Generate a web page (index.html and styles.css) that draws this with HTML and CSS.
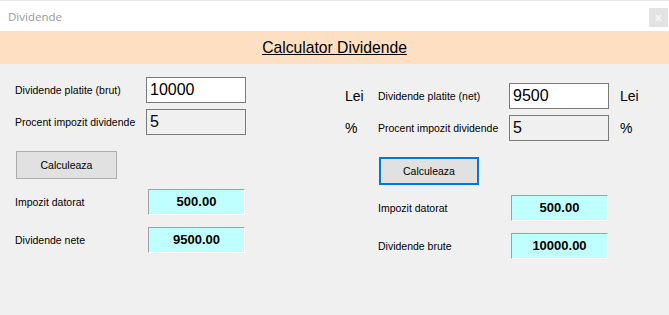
FILE: index.html
```html
<!DOCTYPE html>
<html lang="ro">
<head>
    <meta charset="UTF-8">
    <meta name="viewport" content="width=device-width, initial-scale=1.0">
    <title>Dividende</title>
    <link rel="stylesheet" href="styles.css">
</head>
<body>
    <div class="titlebar">
        <span class="caption">Dividende</span>
        <span class="close">x</span>
    </div>
    <div class="header">
        <h1>Calculator Dividende</h1>
    </div>
    <div class="form">
        <div class="panel left">
            <div class="row">
                <label>Dividende platite (brut)</label>
                <input class="field" type="text" value="10000">
            </div>
            <div class="row">
                <label>Procent impozit dividende</label>
                <input class="field ro" type="text" value="5" readonly>
            </div>
            <button class="btn">Calculeaza</button>
            <div class="row out first">
                <label>Impozit datorat</label>
                <div class="result">500.00</div>
            </div>
            <div class="row out">
                <label>Dividende nete</label>
                <div class="result">9500.00</div>
            </div>
        </div>
        <div class="panel right">
            <div class="row">
                <span class="unit">Lei</span>
                <label>Dividende platite (net)</label>
                <input class="field" type="text" value="9500">
                <span class="unit after">Lei</span>
            </div>
            <div class="row">
                <span class="unit">%</span>
                <label>Procent impozit dividende</label>
                <input class="field ro" type="text" value="5" readonly>
                <span class="unit after">%</span>
            </div>
            <button class="btn focus">Calculeaza</button>
            <div class="row out first">
                <span class="unit"></span>
                <label>Impozit datorat</label>
                <div class="result">500.00</div>
            </div>
            <div class="row out">
                <span class="unit"></span>
                <label>Dividende brute</label>
                <div class="result">10000.00</div>
            </div>
        </div>
    </div>
</body>
</html>
```

FILE: styles.css
```css
* {margin: 0; padding: 0; box-sizing: border-box;}
body {
    width: 669px;
    height: 315px;
    overflow: hidden;
    background: #f0f0f0;
    font-family: "Liberation Sans", Arial, sans-serif;
    color: #000;
}
.titlebar {
    height: 31px;
    border-top: 1px solid #e6e6e6;
    background: #fff;
    display: flex;
    align-items: flex-start;
    justify-content: space-between;
    padding: 7px 1px 0 8px;
}
.caption {
    font-family: "Open Sans", sans-serif;
    font-size: 11.5px;
    line-height: 17px;
    color: #9a9a9a;
}
.close {
    width: 19px;
    height: 19px;
    background: #e3e3e3;
    color: #f6f6f6;
    font-family: "Open Sans", sans-serif;
    font-size: 11px;
    font-weight: bold;
    line-height: 18px;
    text-align: center;
}
.header {
    height: 33px;
    background: #ffdfc1;
}
.header h1 {
    font-size: 15.7px;
    font-weight: normal;
    line-height: 33px;
    text-align: center;
    text-decoration: underline;
}
.form {
    display: flex;
    padding: 13px 0 0 15px;
}
.panel {
    display: flex;
    flex-direction: column;
    align-items: flex-start;
}
.panel.left {
    width: 330px;
}
.panel.right {
    padding-top: 6px;
}
.row {
    display: flex;
    align-items: center;
    height: 26px;
    margin-bottom: 6px;
}
label {
    width: 131px;
    font-size: 10.5px;
}
.field {
    width: 100px;
    height: 26px;
    border: 1px solid #7a7a7a;
    background: #fff;
    padding: 0 3px;
    font-family: "Liberation Sans", Arial, sans-serif;
    font-size: 16px;
    color: #000;
    outline: none;
}
.field.ro {
    background: #f0f0f0;
}
.unit {
    width: 33px;
    font-size: 14px;
}
.unit.after {
    margin-left: 11px;
}
.btn {
    width: 101px;
    height: 28px;
    margin: 10px 0 0 1px;
    background: #e1e1e1;
    border: 1px solid #adadad;
    font-family: "Liberation Sans", Arial, sans-serif;
    font-size: 10.5px;
    color: #000;
}
.btn.focus {
    width: 100px;
    margin-left: 34px;
    border: 2px solid #0078d7;
}
.row.out {
    margin: 12px 0 0;
}
.row.out.first {
    margin-top: 10px;
}
.row.out label {
    width: 133px;
}
.result {
    width: 97px;
    height: 26px;
    background: #c0ffff;
    border-top: 1px solid #a0a0a0;
    border-left: 1px solid #a0a0a0;
    border-right: 1px solid #fff;
    border-bottom: 1px solid #fff;
    font-size: 13px;
    font-weight: bold;
    line-height: 24px;
    text-align: center;
}
```
